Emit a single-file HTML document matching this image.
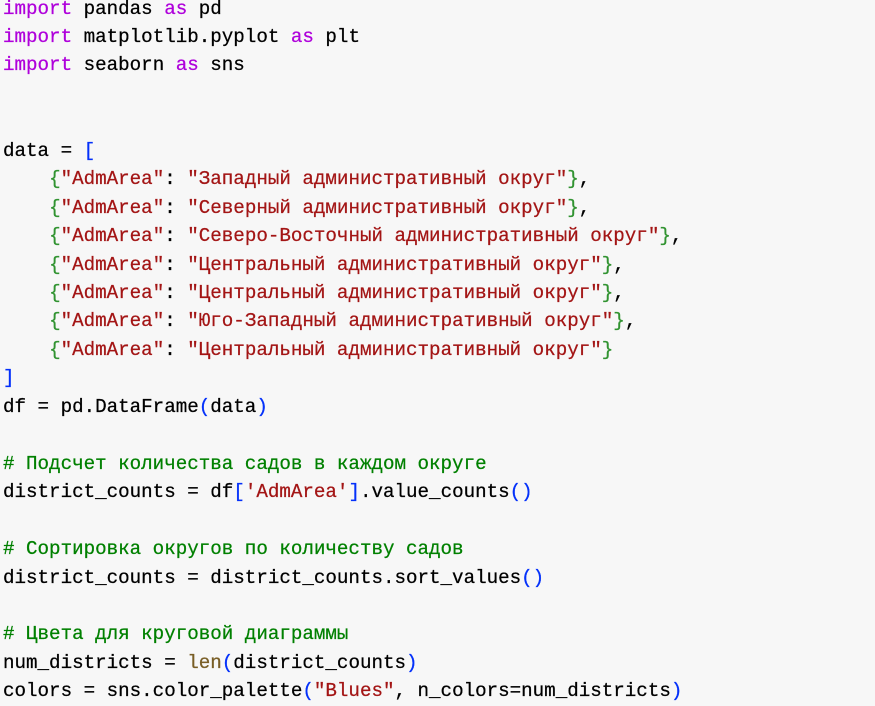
<!DOCTYPE html>
<html><head><meta charset="utf-8"><style>
html,body{margin:0;padding:0;background:#f7f7f7;width:875px;height:704px;overflow:hidden}
pre{position:absolute;left:3px;top:-5.5px;margin:0;font-family:"Liberation Mono","DejaVu Sans Mono",monospace;font-size:19.2px;line-height:28.46px;color:#000;-webkit-text-stroke:0.25px currentColor}
.k{color:#af00db}.s{color:#a31515}.c{color:#008000}.b{color:#0431fa}.g{color:#319331}.f{color:#795e26}
</style></head><body><pre><span class="k">import</span> pandas <span class="k">as</span> pd
<span class="k">import</span> matplotlib.pyplot <span class="k">as</span> plt
<span class="k">import</span> seaborn <span class="k">as</span> sns


data = <span class="b">[</span>
    <span class="g">{</span><span class="s">"AdmArea"</span>: <span class="s">"Западный административный округ"</span><span class="g">}</span>,
    <span class="g">{</span><span class="s">"AdmArea"</span>: <span class="s">"Северный административный округ"</span><span class="g">}</span>,
    <span class="g">{</span><span class="s">"AdmArea"</span>: <span class="s">"Северо-Восточный административный округ"</span><span class="g">}</span>,
    <span class="g">{</span><span class="s">"AdmArea"</span>: <span class="s">"Центральный административный округ"</span><span class="g">}</span>,
    <span class="g">{</span><span class="s">"AdmArea"</span>: <span class="s">"Центральный административный округ"</span><span class="g">}</span>,
    <span class="g">{</span><span class="s">"AdmArea"</span>: <span class="s">"Юго-Западный административный округ"</span><span class="g">}</span>,
    <span class="g">{</span><span class="s">"AdmArea"</span>: <span class="s">"Центральный административный округ"</span><span class="g">}</span>
<span class="b">]</span>
df = pd.DataFrame<span class="b">(</span>data<span class="b">)</span>

<span class="c"># Подсчет количества садов в каждом округе</span>
district_counts = df<span class="b">[</span><span class="s">'AdmArea'</span><span class="b">]</span>.value_counts<span class="b">()</span>

<span class="c"># Сортировка округов по количеству садов</span>
district_counts = district_counts.sort_values<span class="b">()</span>

<span class="c"># Цвета для круговой диаграммы</span>
num_districts = <span class="f">len</span><span class="b">(</span>district_counts<span class="b">)</span>
colors = sns.color_palette<span class="b">(</span><span class="s">"Blues"</span>, n_colors=num_districts<span class="b">)</span>
</pre></body></html>
